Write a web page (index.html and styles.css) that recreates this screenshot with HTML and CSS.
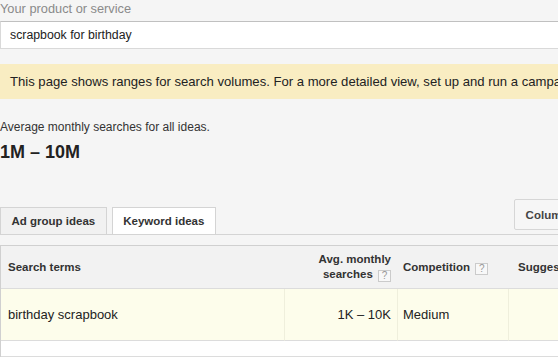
FILE: index.html
```html
<!DOCTYPE html>
<html lang="en">
<head>
    <meta charset="UTF-8">
    <meta name="viewport" content="width=device-width, initial-scale=1.0">
    <title>Keyword Planner</title>
    <link rel="stylesheet" href="styles.css">
</head>
<body>
    <div class="page">
        <label class="field-label" for="product">Your product or service</label>
        <input type="text" id="product" class="field-input" value="scrapbook for birthday">

        <div class="notice">This page shows ranges for search volumes. For a more detailed view, set up and run a campaign.</div>

        <div class="summary">
            <p class="summary-label">Average monthly searches for all ideas.</p>
            <p class="summary-range">1M &ndash; 10M</p>
        </div>

        <div class="tab-bar">
            <div class="tabs">
                <button type="button" class="tab">Ad group ideas</button>
                <button type="button" class="tab active">Keyword ideas</button>
            </div>
            <button type="button" class="columns-btn">Columns &#9662;</button>
        </div>

        <table class="ideas">
            <colgroup>
                <col class="col-term">
                <col class="col-volume">
                <col class="col-competition">
                <col class="col-bid">
            </colgroup>
            <thead>
                <tr>
                    <th>Search terms</th>
                    <th class="num">Avg. monthly<br>searches <span class="help">?</span></th>
                    <th>Competition <span class="help">?</span></th>
                    <th>Suggested bid <span class="help">?</span></th>
                </tr>
            </thead>
            <tbody>
                <tr class="highlight">
                    <td>birthday scrapbook</td>
                    <td class="num">1K &ndash; 10K</td>
                    <td>Medium</td>
                    <td></td>
                </tr>
                <tr class="spacer">
                    <td></td>
                    <td></td>
                    <td></td>
                    <td></td>
                </tr>
            </tbody>
        </table>
    </div>
</body>
</html>
```

FILE: styles.css
```css
html, body {
    margin: 0;
    padding: 0;
    overflow: hidden;
}
body {
    font-family: "Liberation Sans", Arial, sans-serif;
    background-color: #f5f5f5;
    color: #222;
}
.page {
    width: 760px;
}
.field-label {
    display: block;
    font-size: 12.8px;
    line-height: 16px;
    color: #8a8a8a;
    padding-top: 1px;
    margin-bottom: 4px;
}
.field-input {
    display: block;
    box-sizing: border-box;
    width: 100%;
    height: 28px;
    margin: 0;
    padding: 0 0 0 9px;
    border: 1px solid #d9d9d9;
    border-top-color: #c0c0c0;
    border-radius: 0;
    background-color: #fff;
    font-family: inherit;
    font-size: 12.3px;
    color: #222;
    outline: none;
}
.notice {
    margin-top: 15px;
    height: 35px;
    line-height: 35px;
    padding-left: 10px;
    background-color: #f9edc2;
    font-size: 13.1px;
    color: #222;
    white-space: nowrap;
}
.summary {
    margin-top: 21px;
}
.summary p {
    margin: 0;
}
.summary-label {
    font-size: 12px;
    line-height: 15px;
    color: #333;
}
.summary-range {
    margin-top: 6px !important;
    font-size: 18px;
    line-height: 22px;
    font-weight: bold;
    color: #222;
}
.tab-bar {
    width: 596px;
    margin-top: 36px;
    display: flex;
    align-items: flex-end;
    border-bottom: 1px solid #d4d4d4;
}
.tabs {
    display: flex;
    gap: 5px;
}
.tab {
    height: 27px;
    padding: 0 10.5px;
    margin: 0;
    border: 1px solid #d4d4d4;
    border-bottom: none;
    background-color: #f1f1f1;
    font-family: inherit;
    font-size: 11.5px;
    font-weight: bold;
    color: #333;
    cursor: pointer;
}
.tab.active {
    background-color: #fff;
}
.columns-btn {
    margin-left: auto;
    margin-bottom: 4px;
    height: 31px;
    padding: 0 11px;
    border: 1px solid #d6d6d6;
    border-radius: 2px;
    background-color: #f6f6f6;
    font-family: inherit;
    font-size: 11.5px;
    font-weight: bold;
    color: #444;
}
.ideas {
    margin-top: 10px;
    width: 100%;
    table-layout: fixed;
    border-spacing: 0;
    border-top: 1px solid #d0d0d0;
    border-left: 1px solid #d0d0d0;
}
.col-term {
    width: 283px;
}
.col-volume {
    width: 113px;
}
.col-competition {
    width: 111px;
}
th {
    height: 42px;
    padding: 0 6px 0 7px;
    background-color: #f2f2f2;
    border-bottom: 1px solid #dcdcdc;
    font-size: 11.5px;
    line-height: 14.4px;
    font-weight: bold;
    color: #333;
    text-align: left;
    vertical-align: middle;
}
th:nth-child(3) {
    padding-left: 6px;
}
th:nth-child(4) {
    padding-left: 10px;
}
.num {
    text-align: right;
}
td {
    padding: 0 6px 0 7px;
    font-size: 13px;
    line-height: 16px;
    color: #222;
    vertical-align: middle;
    border-bottom: 1px solid #dcdcdc;
}
td + td {
    border-left: 1px solid #efefdc;
}
td:nth-child(3) {
    padding-left: 5px;
}
.highlight td {
    height: 51px;
    background-color: #fdfdeb;
}
.spacer td {
    height: 15px;
    padding: 0;
    background-color: #fff;
    border-left: none;
}
.help {
    display: inline-block;
    box-sizing: border-box;
    width: 13px;
    height: 12px;
    margin-left: 2px;
    border: 1px solid #cbcbcb;
    background-color: #f8f8f8;
    font-size: 10px;
    line-height: 10px;
    font-weight: normal;
    color: #999;
    text-align: center;
    vertical-align: -1px;
}
```
